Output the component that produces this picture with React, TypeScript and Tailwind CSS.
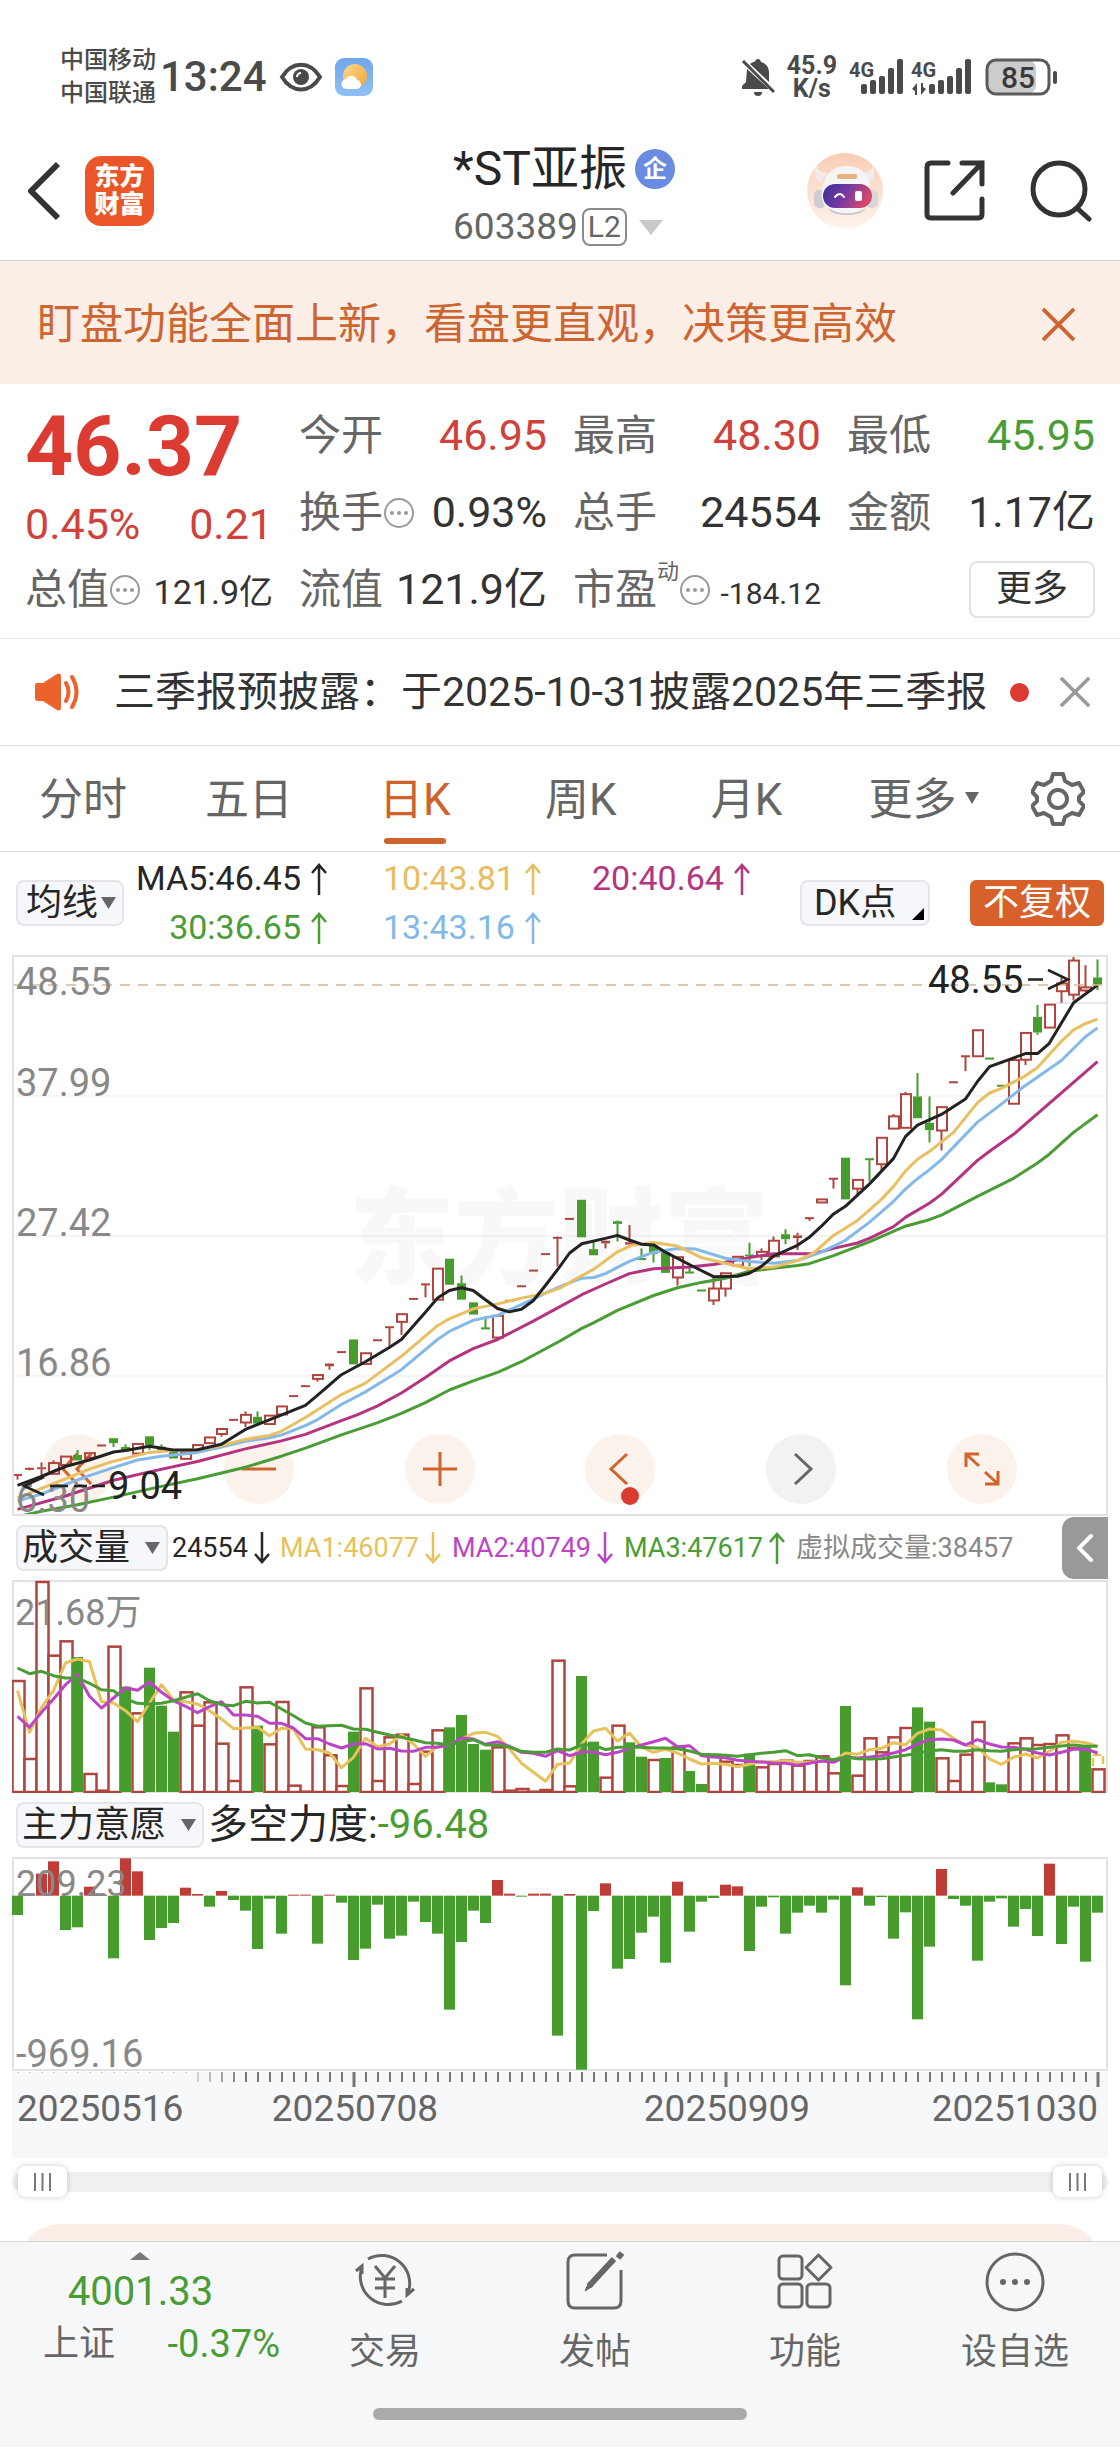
import { useState, type ReactNode } from 'react';
import clsx from 'clsx';

const RED = '#b0443e';
const GREEN = '#479c2e';

type Candle = ['r' | 'g', number, number, number, number];

// colour, high, body top, body bottom, low (price panel units, top = 44)
const CANDLES: Candle[] = [
  ['r', 1400, 1400, 1400, 1412], ['r', 1381, 1384, 1384, 1388], ['r', 1367, 1380, 1385, 1400],
  ['r', 1362, 1369, 1397, 1397], ['r', 1352, 1352, 1374, 1374], ['g', 1335, 1348, 1362, 1362],
  ['r', 1343, 1343, 1355, 1355], ['r', 1323, 1323, 1323, 1323], ['g', 1304, 1304, 1317, 1327],
  ['g', 1320, 1327, 1337, 1337], ['r', 1319, 1319, 1344, 1344], ['g', 1299, 1299, 1322, 1335],
  ['g', 1320, 1326, 1335, 1335], ['g', 1335, 1335, 1357, 1357], ['r', 1340, 1340, 1358, 1358],
  ['r', 1322, 1322, 1338, 1338], ['r', 1302, 1302, 1317, 1317], ['r', 1280, 1280, 1293, 1300],
  ['r', 1256, 1256, 1256, 1256], ['r', 1234, 1243, 1263, 1275], ['g', 1234, 1248, 1266, 1266],
  ['r', 1245, 1245, 1267, 1267], ['r', 1221, 1221, 1242, 1242], ['r', 1194, 1194, 1194, 1194],
  ['r', 1168, 1168, 1168, 1168], ['r', 1139, 1139, 1149, 1156], ['r', 1108, 1109, 1116, 1125],
  ['r', 1079, 1079, 1079, 1079], ['g', 1046, 1046, 1111, 1111], ['r', 1082, 1082, 1110, 1110],
  ['r', 1048, 1048, 1048, 1048], ['r', 1014, 1014, 1014, 1066], ['r', 980, 980, 1000, 1034],
  ['r', 940, 940, 940, 940], ['r', 902, 902, 902, 936], ['r', 861, 861, 942, 942],
  ['g', 835, 835, 903, 903], ['g', 879, 899, 942, 942], ['g', 949, 949, 981, 981],
  ['g', 985, 1017, 1017, 1017], ['r', 984, 984, 1041, 1041], ['r', 945, 945, 945, 945],
  ['r', 907, 907, 907, 907], ['r', 866, 866, 866, 866], ['r', 823, 823, 823, 823],
  ['r', 777, 778, 783, 855], ['r', 731, 731, 731, 731], ['g', 681, 681, 779, 779],
  ['g', 789, 810, 826, 826], ['r', 787, 788, 795, 808], ['g', 735, 737, 744, 790],
  ['r', 747, 792, 798, 798], ['g', 808, 836, 836, 836], ['g', 800, 800, 822, 845],
  ['g', 818, 818, 872, 872], ['r', 830, 831, 884, 905], ['g', 857, 871, 871, 871],
  ['g', 918, 918, 918, 918], ['r', 885, 913, 944, 956], ['r', 872, 873, 913, 934],
  ['r', 830, 830, 853, 853], ['g', 793, 824, 829, 855], ['r', 808, 817, 828, 838],
  ['r', 777, 788, 829, 829], ['g', 758, 771, 784, 797], ['r', 767, 774, 781, 812],
  ['r', 729, 729, 729, 736], ['r', 680, 680, 688, 688], ['r', 626, 626, 626, 652],
  ['g', 571, 571, 680, 680], ['r', 629, 629, 652, 666], ['g', 575, 575, 575, 632],
  ['r', 519, 519, 588, 605], ['r', 457, 463, 495, 495], ['r', 399, 405, 493, 493],
  ['g', 350, 411, 468, 468], ['g', 411, 480, 499, 531], ['r', 439, 439, 500, 552],
  ['r', 374, 374, 374, 374], ['r', 306, 306, 306, 345], ['r', 238, 238, 306, 306],
  ['g', 312, 312, 312, 312], ['g', 383, 383, 383, 383], ['r', 316, 316, 430, 430],
  ['r', 245, 245, 315, 329], ['g', 172, 203, 244, 250], ['r', 171, 171, 231, 231],
  ['r', 95, 116, 136, 166], ['r', 44, 56, 145, 160], ['r', 68, 126, 134, 138],
  ['g', 53, 100, 119, 133],
];

// Moving averages, sampled; each list is [left half, right half] of x,y pairs.
const PRICE_MAS: { color: string; left: string; right: string }[] = [
  {
    color: '#4a9c35',
    left: '49,1509 116,1495 217,1478 318,1458 452,1430 553,1410 687,1380 788,1351 855,1330 956,1295 1056,1264 1124,1239 1191,1211 1258,1178 1325,1154 1393,1132 1460,1104 1568,1050',
    right: '61,1017 95,1002 161,970 262,931 329,911 396,897 463,886 530,868 598,860 665,853 698,848 766,827 866,791 967,750 1034,733 1068,721 1169,672 1270,625 1337,585 1370,562 1438,505 1505,459',
  },
  {
    color: '#b5347f',
    left: '49,1490 183,1455 318,1414 418,1392 553,1365 687,1332 788,1311 855,1294 956,1258 1000,1243 1056,1220 1124,1186 1191,1145 1258,1102 1325,1070 1393,1046 1493,998 1568,960',
    right: '61,929 127,901 194,874 262,861 362,857 430,850 530,832 598,822 710,822 766,808 833,794 866,782 934,751 967,727 1034,690 1068,667 1169,578 1203,554 1270,510 1505,320',
  },
  {
    color: '#83b9e8',
    left: '49,1468 116,1450 183,1425 250,1402 318,1381 385,1361 452,1351 553,1341 620,1327 687,1312 754,1303 788,1296 855,1271 888,1256 956,1216 1023,1183 1124,1125 1225,1046 1258,1025 1325,996 1393,983 1460,955 1527,925 1568,908',
    right: '61,886 95,884 127,874 194,842 262,818 329,808 380,810 463,834 530,842 598,847 665,840 732,818 799,787 866,740 934,685 967,653 1001,626 1034,603 1068,576 1169,478 1236,431 1303,382 1404,317 1471,255 1505,232',
  },
  {
    color: '#eabf62',
    left: '49,1460 116,1435 183,1410 250,1385 318,1364 418,1341 485,1336 553,1334 620,1323 687,1307 754,1297 788,1286 855,1250 956,1190 1023,1160 1124,1090 1225,1010 1258,992 1325,966 1393,953 1460,938 1527,925 1568,912',
    right: '40,890 95,862 161,817 200,800 262,793 329,802 396,832 463,847 530,861 598,857 665,840 710,820 766,774 833,735 900,680 934,646 967,606 1001,575 1034,555 1102,505 1169,427 1203,402 1236,390 1303,357 1337,335 1404,267 1438,237 1471,221 1505,209',
  },
  {
    color: '#222222',
    left: '49,1427 116,1404 183,1378 250,1361 318,1340 352,1336 418,1325 485,1335 553,1334 620,1320 687,1281 754,1256 855,1218 888,1193 956,1138 1023,1104 1090,1067 1124,1046 1191,975 1225,938 1258,918 1292,911 1325,918 1359,942 1393,965 1426,974 1460,967 1493,945 1527,905 1568,855',
    right: '27,820 61,796 127,782 161,774 194,786 228,797 262,799 295,818 362,850 430,882 497,881 530,873 564,855 598,828 665,800 698,779 732,750 766,718 799,698 866,640 934,573 967,516 1001,486 1068,458 1135,418 1169,372 1203,333 1303,299 1337,299 1370,272 1438,166 1505,120',
  },
];

// Volume bar tops, 880 = zero, 246 = 21.68万
const VOLUMES = [
  543, 777, 246, 467, 424, 474, 822, 872, 440, 563, 640, 506, 620, 698, 577, 677, 607, 731, 843, 562,
  680, 733, 606, 857, 875, 682, 766, 858, 698, 565, 843, 712, 704, 852, 755, 691, 685, 648, 735, 752,
  742, 872, 867, 875, 870, 482, 859, 531, 728, 833, 677, 730, 773, 780, 777, 742, 816, 855, 765, 785,
  795, 764, 802, 792, 782, 797, 783, 769, 820, 621, 827, 715, 757, 712, 684, 625, 668, 775, 843, 764,
  666, 850, 856, 730, 715, 735, 732, 706, 745, 742, 808,
];
const GREEN_VOLUME = new Set([
  5, 9, 11, 12, 13, 20, 28, 36, 37, 38, 39, 47, 48, 51, 52, 54, 56, 57, 61, 69, 75, 76, 81, 82, 89,
]);

const VOLUME_MAS = [
  {
    color: '#e5c25a',
    values: [
      575, 700, 625, 575, 492, 480, 488, 608, 612, 635, 668, 612, 557, 603, 608, 615, 635, 660, 689, 687,
      685, 710, 688, 690, 750, 752, 762, 806, 775, 718, 743, 735, 708, 735, 772, 742, 738, 720, 703, 700,
      712, 750, 793, 820, 847, 796, 793, 735, 696, 688, 726, 702, 745, 760, 751, 762, 780, 795, 793, 796,
      803, 796, 788, 788, 786, 790, 790, 786, 787, 762, 766, 752, 748, 731, 738, 703, 690, 693, 718, 738,
      745, 780, 796, 775, 765, 777, 757, 730, 727, 731, 742,
    ],
  },
  {
    color: '#bb45c6',
    values: [
      652, 685, 640, 600, 557, 527, 592, 627, 597, 566, 574, 549, 580, 605, 622, 641, 623, 608, 648, 648,
      652, 673, 673, 687, 719, 719, 735, 747, 735, 734, 750, 748, 756, 757, 745, 745, 738, 717, 720, 736,
      728, 742, 760, 763, 772, 755, 770, 759, 759, 767, 760, 748, 738, 728, 718, 743, 740, 770, 774, 776,
      784, 787, 789, 792, 793, 799, 793, 786, 790, 774, 777, 774, 770, 762, 752, 735, 722, 720, 723, 738,
      722, 735, 744, 745, 751, 762, 768, 760, 751, 750, 762,
    ],
  },
  {
    color: '#4a9c35',
    values: [
      507, 524, 517, 530, 537, 537, 553, 572, 575, 600, 613, 615, 613, 605, 595, 584, 605, 617, 620, 607,
      612, 610, 630, 650, 672, 682, 680, 679, 690, 691, 700, 708, 715, 722, 731, 733, 738, 728, 722, 738,
      738, 744, 757, 760, 760, 750, 753, 738, 738, 752, 745, 745, 745, 747, 747, 749, 756, 766, 767, 769,
      772, 767, 763, 760, 755, 770, 767, 776, 782, 774, 779, 780, 779, 774, 769, 763, 756, 752, 757, 757,
      752, 755, 757, 752, 750, 749, 745, 741, 738, 742, 742,
    ],
  },
];

// Bar ends around the zero line at 290
const FORCE = [
  348, 287, 224, 187, 393, 385, 263, 287, 478, 178, 217, 423, 387, 372, 266, 285, 323, 276, 303, 335,
  450, 299, 404, 287, 287, 434, 287, 311, 483, 449, 317, 419, 410, 308, 369, 404, 632, 429, 335, 372,
  243, 284, 293, 284, 284, 710, 285, 812, 336, 253, 509, 480, 401, 353, 491, 248, 398, 308, 297, 257,
  262, 456, 323, 295, 404, 341, 320, 341, 302, 559, 265, 320, 294, 419, 340, 661, 443, 210, 300, 320,
  485, 308, 298, 383, 330, 411, 194, 435, 323, 488, 341,
];

const barX = (i: number) => 5.5 + i * 12;
const priceY = (v: number) => (v - 44) / 2.613 + 1;
const volumeY = (v: number) => (v - 246) / 3 + 1;
const forceY = (v: number) => (v - 177) / 3 + 1;

function pricePoints(left: string, right: string) {
  const place = (list: string, shift: number) =>
    list.split(' ').map((pair) => {
      const [x, y] = pair.split(',').map(Number);
      return `${((x + shift) / 2.8 - 12).toFixed(1)},${priceY(y).toFixed(1)}`;
    });
  return [...place(left, 0), ...place(right, 1568)].join(' ');
}

function SignalBars() {
  return (
    <>
      {[10, 14, 18, 26, 35].map((h, i) => (
        <rect key={h} x={18 + i * 9} y={36 - h} width="6" height={h} rx="2" />
      ))}
    </>
  );
}

function StatusBar() {
  return (
    <div className="flex items-center justify-between pt-11 pr-[62px] pb-3 pl-[60px] text-[#4a4a4a]">
      <div className="flex items-center">
        <div className="text-[24px] leading-[33px] font-medium">
          <p>中国移动</p>
          <p>中国联通</p>
        </div>
        <span className="ml-1 text-[42px] leading-[66px] font-medium">13:24</span>
        <svg className="ml-3 h-[30px] w-[44px]" viewBox="0 0 44 30" fill="none" stroke="currentColor">
          <path d="M3 15C13-1.500 31-1.500 41 15C31 31.500 13 31.500 3 15Z" strokeWidth="4" />
          <circle cx="22" cy="15" r="8" fill="currentColor" stroke="none" />
          <path d="M18 15a4 4 0 0 1 4-4" stroke="#fff" strokeWidth="2" />
        </svg>
        <svg className="ml-3 size-[38px]" viewBox="0 0 38 38">
          <defs>
            <linearGradient id="sky" x2="0" y2="1">
              <stop stopColor="#6fa6ec" />
              <stop offset="1" stopColor="#8fc1f5" />
            </linearGradient>
            <linearGradient id="sun" x2="1" y2="1">
              <stop stopColor="#fbd98a" />
              <stop offset="1" stopColor="#f2a437" />
            </linearGradient>
          </defs>
          <rect width="38" height="38" rx="9" fill="url(#sky)" />
          <circle cx="20" cy="18" r="12" fill="url(#sun)" />
          <path d="M12 31a5 5 0 0 1-1-10 6 6 0 0 1 11 1 4.500 4.500 0 0 1-1 9Z" fill="#fff" />
        </svg>
      </div>
      <div className="flex items-center">
        <svg className="h-[38px] w-[34px]" viewBox="0 0 34 38" fill="currentColor">
          <path d="M17 1c1.500 0 2.500 1 3 3 6 2 8 6 8 11v9L9 6c1-1 3-2 5-2.500C14.500 2 15.500 1 17 1ZM6 11l22 20H1v-3l4-4Z" />
          <path d="M2 3l31 31" stroke="currentColor" strokeWidth="3" />
          <path d="M13 34h8a4 4 0 0 1-8 0Z" />
        </svg>
        <div className="ml-3 text-center text-[25px] leading-[23px] font-bold">
          <p>45.9</p>
          <p>K/s</p>
        </div>
        <svg className="ml-3 h-[38px] w-[62px] overflow-visible" viewBox="-6 0 62 38" fill="currentColor">
          <text x="-6" y="19" className="text-[20px] font-bold">4G</text>
          <g transform="translate(-12 0)"><SignalBars /></g>
        </svg>
        <svg className="h-[38px] w-[62px] overflow-visible" viewBox="0 0 62 38" fill="currentColor">
          <text x="0" y="19" className="text-[20px] font-bold">4G</text>
          <path d="M1 31l5-6v12h-2v-4ZM15 31l-5 6V25h2v4Z" />
          <SignalBars />
        </svg>
        <svg className="ml-3 h-[38px] w-[73px]" viewBox="0 0 73 38">
          <rect x="3" y="3" width="48" height="32" rx="7" fill="#cccccc" />
          <rect x="2" y="2" width="62" height="34" rx="9" fill="none" stroke="#5a5a5a" strokeWidth="3" />
          <rect x="68" y="13" width="4" height="13" rx="2" fill="#4a4a4a" />
          <text x="33" y="30" textAnchor="middle" fill="#3a3a3a" className="text-[30px] font-medium">85</text>
        </svg>
      </div>
    </div>
  );
}

function Robot() {
  return (
    <svg className="size-[78px]" viewBox="0 0 78 78">
      <defs>
        <linearGradient id="halo" x2="0" y2="1">
          <stop stopColor="#f9cdb3" />
          <stop offset="1" stopColor="#fff4ee" />
        </linearGradient>
        <linearGradient id="visor" x2="1" y2=".3">
          <stop stopColor="#3a2f9c" />
          <stop offset=".55" stopColor="#7a3aa0" />
          <stop offset="1" stopColor="#d5486c" />
        </linearGradient>
      </defs>
      <circle cx="39" cy="39" r="38" fill="url(#halo)" />
      <path d="M10 14c-3 7-1 14 5 16l6-9c-6 0-9-3-11-7ZM67 14c3 7 1 14-5 16l-6-9c6 0 9-3 11-7Z" fill="#f1ecee" />
      <rect x="8" y="38" width="12" height="18" rx="5" fill="#cfcbd3" />
      <rect x="60" y="38" width="12" height="18" rx="5" fill="#d9d5db" />
      <path d="M16 38c2-15 10-24 25-24s22 9 24 24c2 14-5 24-24 24S14 53 16 38Z" fill="#f6f4f6" />
      <path d="M22 56c10 7 28 7 38 0-3 5-9 7-19 7s-16-2-19-7Z" fill="#c9c6cc" />
      <rect x="31" y="22" width="20" height="5" rx="2" fill="#e6b27c" />
      <rect x="17" y="32" width="49" height="24" rx="12" fill="url(#visor)" />
      <path d="M29 45q5-6 9 0" fill="none" stroke="#fff" strokeWidth="2" strokeLinecap="round" />
      <rect x="49" y="39" width="7" height="10" rx="2" fill="#fff" />
    </svg>
  );
}

function Header() {
  return (
    <header className="flex items-center justify-between border-b border-[#d5d5d8] pr-7 pl-6">
      <div className="flex w-[286px] items-center">
        <button type="button" aria-label="返回">
          <svg className="h-[60px] w-10" viewBox="0 0 40 60" fill="none" stroke="#333" strokeWidth="6">
            <path d="M34 3L7 30L34 57" strokeLinejoin="round" />
          </svg>
        </button>
        <span className="ml-[21px] grid h-[70px] w-[69px] place-content-center rounded-[16px] bg-[#ea5628] text-[25px] leading-[28px] font-black text-white">
          <span>东方</span>
          <span>财富</span>
        </span>
      </div>
      <div className="pt-[13px] pb-[9px] pl-3 text-center">
        <h1 className="flex items-center justify-center text-[48px] leading-[68px] text-[#262626]">
          *ST亚振
          <span className="ml-2 grid size-10 place-content-center rounded-full bg-[#698ce0] text-[24px] leading-[32px] font-bold text-white">
            企
          </span>
        </h1>
        <button type="button" className="flex items-center justify-center text-[37px] leading-[48px] text-[#666]">
          603389
          <span className="mr-3 ml-1 rounded-[8px] border-2 border-[#8a8a8a] px-1 text-[30px] leading-[34px]">L2</span>
          <svg className="h-[15px] w-6" viewBox="0 0 24 15"><path d="M0 0h24L12 15Z" fill="#c9c9c9" /></svg>
        </button>
      </div>
      <div className="flex w-[286px] items-center justify-end">
        <button type="button" aria-label="智能助手"><Robot /></button>
        <button type="button" aria-label="分享" className="ml-10">
          <svg className="size-[62px]" viewBox="0 0 62 62" fill="none" stroke="#333" strokeWidth="5" strokeLinecap="round">
            <path d="M24 3H7Q3 3 3 7V54Q3 58 7 58H54Q58 58 58 54V39" />
            <path d="M38 3H58V24M58 3L29 33" />
          </svg>
        </button>
        <button type="button" aria-label="搜索" className="ml-11">
          <svg className="size-[62px]" viewBox="0 0 62 62" fill="none" stroke="#333" strokeWidth="5" strokeLinecap="round">
            <circle cx="29" cy="29" r="26" />
            <path d="M47 48L59 59" />
          </svg>
        </button>
      </div>
    </header>
  );
}

function Cross({ className }: { className: string }) {
  return (
    <svg className={className} viewBox="0 0 34 34" fill="none" stroke="currentColor" strokeWidth="4">
      <path d="M1 1L33 33M33 1L1 33" />
    </svg>
  );
}

function InfoDot() {
  return (
    <svg className="size-8 shrink-0" viewBox="0 0 32 32" fill="#999">
      <circle cx="16" cy="16" r="14" fill="none" stroke="#999" strokeWidth="2" />
      <circle cx="9" cy="16" r="2" />
      <circle cx="16" cy="16" r="2" />
      <circle cx="23" cy="16" r="2" />
    </svg>
  );
}

function Stat({ label, info, sup, children }: { label: string; info?: boolean; sup?: string; children: ReactNode }) {
  return (
    <dl className="flex h-[77px] items-center whitespace-nowrap">
      <dt className="flex items-center text-[42px] text-[#666]">
        {label}
        {sup && <span className="self-start text-[22px] leading-[28px]">{sup}</span>}
        {info && <InfoDot />}
      </dt>
      <dd className="ml-auto text-[43px]">{children}</dd>
    </dl>
  );
}

function Quote() {
  return (
    <section className="grid grid-cols-4 gap-x-[26px] border-b border-[#e6e6e8] px-[25px] pt-[13px] pb-[10px] text-[#333]">
      <div className="row-span-2 text-[#cf413a]">
        <p className="text-[84px] leading-[100px] font-bold text-[#dc3b32]">46.37</p>
        <p className="flex justify-between text-[43px] leading-[54px]">
          <span>0.45%</span>
          <span>0.21</span>
        </p>
      </div>
      <Stat label="今开"><span className="text-[#cf413a]">46.95</span></Stat>
      <Stat label="最高"><span className="text-[#cf413a]">48.30</span></Stat>
      <Stat label="最低"><span className="text-[#4a9c35]">45.95</span></Stat>
      <Stat label="换手" info>0.93%</Stat>
      <Stat label="总手">24554</Stat>
      <Stat label="金额">1.17亿</Stat>
      <Stat label="总值" info><span className="text-[34px]">121.9亿</span></Stat>
      <Stat label="流值">121.9亿</Stat>
      <Stat label="市盈" sup="动" info><span className="text-[30px]">-184.12</span></Stat>
      <div className="flex h-[77px] items-center justify-end">
        <button type="button" className="rounded-[8px] border-2 border-[#e2e2e4] px-[25px] text-[36px] leading-[53px]">
          更多
        </button>
      </div>
    </section>
  );
}

function Notice() {
  return (
    <div className="flex items-center pr-[30px] pl-[35px] text-[41px] leading-[106px] whitespace-nowrap text-[#333]">
      <svg className="mr-[33px] h-[38px] w-[46px] shrink-0" viewBox="0 0 46 38" fill="#ec622b">
        <path d="M2 10Q0 10 0 13V25Q0 28 3 28H8L22 37Q26 39 26 34V4Q26-1 22 1L8 10Z" />
        <path d="M31 10q5 9 0 18M37 4q9 15 0 30" fill="none" stroke="#ec622b" strokeWidth="4" strokeLinecap="round" />
      </svg>
      <p>三季报预披露：于2025-10-31披露2025年三季报</p>
      <span className="mr-[31px] ml-auto size-[19px] rounded-full bg-[#dc3b32]" />
      <button type="button" aria-label="关闭公告" className="text-[#999]"><Cross className="size-[30px]" /></button>
    </div>
  );
}

const TABS = ['分时', '五日', '日K', '周K', '月K', '更多'];

function Tabs() {
  const [active, setActive] = useState('日K');
  return (
    <nav className="grid grid-cols-[repeat(6,4fr)_3fr] border-y border-[#dcdcde]">
      {TABS.map((t) => (
        <button
          key={t}
          type="button"
          onClick={() => setActive(t)}
          className={clsx('relative pt-1 text-[44px] leading-[101px]', t === active ? 'text-[#d0622c]' : 'text-[#666]')}
        >
          {t}
          {t === '更多' && (
            <svg className="absolute top-[46px] right-[17px] h-3 w-[14px]" viewBox="0 0 14 12">
              <path d="M0 0h14L7 12Z" fill="#666" />
            </svg>
          )}
          {t === active && (
            <span className="absolute bottom-[7px] left-1/2 h-[6px] w-[62px] -translate-x-1/2 rounded-full bg-[#d0622c]" />
          )}
        </button>
      ))}
      <button type="button" aria-label="设置" className="grid place-content-center">
        <svg className="size-[54px]" viewBox="0 0 54 54" fill="none" stroke="#666" strokeWidth="4" strokeLinejoin="round">
          <path d="M22 2H32L34 9L41 13L48 11L53 20L48 25V29L53 34L48 43L41 41L34 45L32 52H22L20 45L13 41L6 43L1 34L6 29V25L1 20L6 11L13 13L20 9Z" />
          <circle cx="27" cy="27" r="9" />
        </svg>
      </button>
    </nav>
  );
}

function Picker({ name, options, className }: { name: string; options: string[]; className: string }) {
  return (
    <label className="relative flex items-center">
      <select
        aria-label={name}
        className={clsx(
          'appearance-none rounded-[8px] border-2 border-[#e3e5e8] bg-[#f6f7fa] text-[36px] leading-[42px] text-[#262626]',
          className,
        )}
      >
        {options.map((o) => <option key={o}>{o}</option>)}
      </select>
      <svg className="pointer-events-none absolute right-2 h-3 w-[15px]" viewBox="0 0 15 12">
        <path d="M0 0h15L7.500 12Z" fill="#666" />
      </svg>
    </label>
  );
}

function Arrow({ down }: { down?: boolean }) {
  return (
    <svg className="h-8 w-5 shrink-0" viewBox="0 0 20 32" fill="none" stroke="currentColor" strokeWidth="2.500">
      <path d={down ? 'M10 0V30M3 22L10 30L17 22' : 'M10 32V2M3 10L10 2L17 10'} />
    </svg>
  );
}

function MaBar() {
  const cell = 'flex items-center gap-2';
  return (
    <div className="flex items-center pr-4 pl-4 pt-[2px] pb-[3px] whitespace-nowrap">
      <Picker name="均线" options={['均线']} className="w-[108px] pl-2" />
      <div className="ml-3 grid grid-cols-[193px_209px_1fr] text-[34px] leading-[49px]">
        <span className={clsx(cell, 'justify-end text-[#262626]')}>MA5:46.45<Arrow /></span>
        <span className={clsx(cell, 'pl-[54px] text-[#e8bd60]')}>10:43.81<Arrow /></span>
        <span className={clsx(cell, 'pl-[54px] text-[#b5347f]')}>20:40.64<Arrow /></span>
        <span className={clsx(cell, 'justify-end text-[#4a9c35]')}>30:36.65<Arrow /></span>
        <span className={clsx(cell, 'pl-[54px] text-[#83b9e8]')}>13:43.16<Arrow /></span>
      </div>
      <button
        type="button"
        className="relative ml-auto w-[130px] rounded-[8px] border-2 border-[#e3e5e8] bg-[#f6f7fa] pl-3 text-left text-[36px] leading-[42px] text-[#262626]"
      >
        DK点
        <svg className="absolute right-1 bottom-1 size-3" viewBox="0 0 12 12"><path d="M12 0V12H0Z" /></svg>
      </button>
      <button type="button" className="ml-10 rounded-[6px] bg-[#d8612b] px-[13px] text-[36px] leading-[46px] text-white">
        不复权
      </button>
    </div>
  );
}

function CandleMark({ candle, x }: { candle: Candle; x: number }) {
  const [kind, high, top, bottom, low] = candle;
  const color = kind === 'r' ? RED : GREEN;
  const t = priceY(top);
  const b = priceY(bottom);
  const hollow = kind === 'r' && bottom - top > 7;
  return (
    <g stroke={color} strokeWidth="2">
      {high < top && <path d={`M${x} ${priceY(high)}V${t}`} />}
      {low > bottom && <path d={`M${x} ${b}V${priceY(low)}`} />}
      {top === bottom ? (
        <path d={`M${x - 4.5} ${t}h9`} />
      ) : hollow ? (
        <rect x={x - 4.5} y={t} width="10" height={b - t} fill="none" />
      ) : (
        <rect x={x - 4.5} y={t} width="9" height={b - t} fill={color} stroke="none" />
      )}
    </g>
  );
}

function RoundButton({ label, muted, dot, children }: { label: string; muted?: boolean; dot?: boolean; children: ReactNode }) {
  return (
    <button
      type="button"
      aria-label={label}
      className={clsx(
        'relative grid size-[70px] place-content-center rounded-full',
        muted ? 'bg-[#f2f2f2] text-[#666]' : 'bg-[#fcf2ec] text-[#d0622c]',
      )}
    >
      <svg className="size-9" viewBox="0 0 36 36" fill="none" stroke="currentColor" strokeWidth="3">{children}</svg>
      {dot && <span className="absolute right-4 -bottom-px size-[18px] rounded-full bg-[#dc3b32]" />}
    </button>
  );
}

const PRICE_LABELS = [
  { text: '48.55', y: 40 },
  { text: '37.99', y: 141 },
  { text: '27.42', y: 281 },
  { text: '16.86', y: 421 },
  { text: '6.30', y: 557 },
];

function PriceChart() {
  return (
    <div className="relative mx-3">
      <div className="absolute right-[91px] bottom-3 left-[31px] flex justify-between">
        <RoundButton label="最早"><path d="M17 3L3 18L17 33M31 3L17 18L31 33" /></RoundButton>
        <RoundButton label="缩小"><path d="M1 18H35" /></RoundButton>
        <RoundButton label="放大"><path d="M1 18H35M18 1V35" /></RoundButton>
        <RoundButton label="向左" dot><path d="M25 3L9 18L25 33" /></RoundButton>
        <RoundButton label="向右" muted><path d="M12 3L28 18L12 33" /></RoundButton>
        <RoundButton label="全屏"><path d="M2 16V3H15M2 3L15 15M34 20V33H21M34 33L21 21" /></RoundButton>
      </div>
      <svg className="pointer-events-none relative block w-full" viewBox="0 0 1096 561">
        <text x="337" y="320" fill="#f8f8f8" className="text-[105px] font-black">东方财富</text>
        <path d="M0 141H1096M0 281H1096M0 421H1096" stroke="#d6d6d6" strokeDasharray="1 1" />
        <path d="M1044 48H1096" stroke="#cfcfcf" />
        {CANDLES.map((c, i) => <CandleMark key={i} candle={c} x={barX(i)} />)}
        {PRICE_MAS.map((m) => (
          <polyline
            key={m.color}
            points={pricePoints(m.left, m.right)}
            fill="none"
            stroke={m.color}
            strokeWidth="3"
            strokeLinejoin="round"
          />
        ))}
        <path d="M0 30H1096" stroke="#d6b88f" strokeWidth="1.500" strokeDasharray="10 8" />
        <g fill="#888" className="text-[38px]">
          {PRICE_LABELS.map((l) => <text key={l.text} x="4" y={l.y}>{l.text}</text>)}
        </g>
        <g fill="#222" className="text-[38px]">
          <text x="916" y="38">48.55</text>
          <text x="96" y="544">9.04</text>
        </g>
        <path
          d="M1016 24.500H1031M1036 15L1056 24.500L1036 34M32 522L12 531L32 540M38 531H56M62 531H75M80 531H93"
          fill="none"
          stroke="#222"
          strokeWidth="2.500"
        />
        <rect x="1" y="1" width="1094" height="559" fill="none" stroke="#e2e2e2" strokeWidth="2" />
      </svg>
    </div>
  );
}

function VolumeChart() {
  return (
    <svg className="block w-full px-3" viewBox="0 0 1096 213">
      <rect x="1" y="1" width="1094" height="211" fill="none" stroke="#e2e2e2" strokeWidth="2" />
      {VOLUMES.map((v, i) => {
        const y = volumeY(v);
        return GREEN_VOLUME.has(i) ? (
          <rect key={i} x={barX(i) - 5.5} y={y} width="11" height={212 - y} fill={GREEN} />
        ) : (
          <rect key={i} x={barX(i) - 5} y={y + 1} width="12" height={211 - y} fill="#fff" stroke={RED} strokeWidth="2.500" />
        );
      })}
      <path d="M1081 186V175H1091V186" fill="none" stroke="#e5c25a" strokeWidth="2.500" strokeDasharray="8 3" />
      {VOLUME_MAS.map((m) => (
        <polyline
          key={m.color}
          points={m.values.map((v, i) => `${barX(i)},${volumeY(v).toFixed(1)}`).join(' ')}
          fill="none"
          stroke={m.color}
          strokeWidth="3"
          strokeLinejoin="round"
        />
      ))}
      <text x="3" y="45" fill="#888" className="text-[36px]">21.68万</text>
    </svg>
  );
}

function ForceChart() {
  return (
    <svg className="block w-full px-3" viewBox="0 0 1096 214">
      <rect x="1" y="1" width="1094" height="212" fill="none" stroke="#e2e2e2" strokeWidth="2" />
      {FORCE.map((v, i) => {
        const up = v < 290;
        const y = forceY(up ? v : 290);
        return (
          <rect
            key={i}
            x={barX(i) - 5.5}
            y={y}
            width="11"
            height={Math.abs(v - 290) / 3}
            fill={up ? '#c03c36' : GREEN}
          />
        );
      })}
      <g fill="#888" className="text-[36px]">
        <text x="4" y="39">209.23</text>
        <text x="4" y="210" className="text-[38px]">-969.16</text>
      </g>
    </svg>
  );
}

const MAJOR_TICKS = [28, 59, 90];

function Timeline() {
  return (
    <svg className="block w-full px-3" viewBox="0 0 1096 87">
      <rect y="1" width="1096" height="86" fill="#f7f8fa" />
      {CANDLES.map((_, i) => {
        const major = MAJOR_TICKS.includes(i);
        const height = i < 15 ? 1 : major ? 15 : 10;
        return (
          <rect
            key={i}
            x={barX(i) - (major ? 1 : 0.5)}
            y="1"
            width={major ? 3 : 2}
            height={height}
            fill="#777"
            opacity={i < 15 ? 0.3 : Math.min(1, (i - 13) / 6)}
          />
        );
      })}
      <g fill="#666" className="text-[37px]">
        <text x="5" y="50">20250516</text>
        <text x="343" y="50" textAnchor="middle">20250708</text>
        <text x="715" y="50" textAnchor="middle">20250909</text>
        <text x="1086" y="50" textAnchor="end">20251030</text>
      </g>
    </svg>
  );
}

function Grip() {
  return (
    <span className="grid h-[31px] w-[49px] place-content-center rounded-[8px] bg-white shadow-[0_0_6px_rgba(0,0,0,0.2)]">
      <svg className="h-[18px] w-[19px]" viewBox="0 0 19 18" stroke="#777" strokeWidth="2">
        <path d="M2 0V18M9.500 0V18M17 0V18" />
      </svg>
    </span>
  );
}

function RangeSlider() {
  return (
    <div className="relative mx-3 mt-2 mb-[27px] flex h-[31px] items-center justify-between px-[6px]">
      <span className="absolute inset-x-0 h-5 rounded-full bg-[#f0f0f3]" />
      <span className="relative"><Grip /></span>
      <span className="relative"><Grip /></span>
      <input type="range" aria-label="起始日期" defaultValue={0} className="absolute left-0 w-1/2 opacity-0" />
      <input type="range" aria-label="结束日期" defaultValue={100} className="absolute right-0 w-1/2 opacity-0" />
    </div>
  );
}

const ACTIONS: { label: string; icon: ReactNode }[] = [
  {
    label: '交易',
    icon: (
      <>
        <path d="M15 9A28 28 0 0 1 55 43M49 51A28 28 0 0 1 9 17" />
        <path d="M3 21L9 16V24M61 39L54 45V38" />
        <path d="M22 16L32 28L42 16M32 28V48M22 29H42M22 38H42" />
      </>
    ),
  },
  {
    label: '发帖',
    icon: (
      <>
        <path d="M44 5H12Q5 5 5 12V51Q5 58 12 58H51Q58 58 58 51V20" />
        <path d="M26 36L51 9" strokeWidth="6" />
        <path d="M55 8L59 3" strokeWidth="6" />
        <path d="M22 41L30 36L26 32Z" fill="currentColor" strokeWidth="1" />
      </>
    ),
  },
  {
    label: '功能',
    icon: (
      <>
        <rect x="6" y="6" width="23" height="23" rx="4" />
        <rect x="6" y="34" width="23" height="23" rx="4" />
        <rect x="34" y="34" width="23" height="23" rx="4" />
        <path d="M45.500 5L58 17.500L45.500 30L33 17.500Z" strokeLinejoin="round" />
      </>
    ),
  },
  {
    label: '设自选',
    icon: (
      <>
        <circle cx="32" cy="32" r="28" />
        <g fill="currentColor" stroke="none">
          <circle cx="20" cy="32" r="3" />
          <circle cx="32" cy="32" r="3" />
          <circle cx="44" cy="32" r="3" />
        </g>
      </>
    ),
  },
];

function BottomBar() {
  return (
    <footer className="border-t border-[#d3d6d9] bg-[#f6f7f9] pb-[27px] text-[#666]">
      <div className="flex">
        <a href="#index" className="block w-1/4 pt-[10px] pl-[43px]">
          <svg className="ml-[87px] h-2 w-5" viewBox="0 0 20 8"><path d="M10 0L20 8H0Z" fill="#777" /></svg>
          <p className="w-[195px] pt-2 text-center text-[40px] leading-[48px] text-[#4a9c35]">4001.33</p>
          <p className="flex justify-between text-[36px] leading-[56px]">
            上证<span className="text-[38px] text-[#4a9c35]">-0.37%</span>
          </p>
        </a>
        {ACTIONS.map((a) => (
          <button key={a.label} type="button" className="flex flex-1 flex-col items-center pt-2 text-[36px] leading-[52px]">
            <svg className="mb-3 size-16" viewBox="0 0 64 64" fill="none" stroke="currentColor" strokeWidth="3">
              {a.icon}
            </svg>
            {a.label}
          </button>
        ))}
      </div>
      <div className="mx-auto mt-[30px] h-3 w-1/3 rounded-full bg-[#a9abab]" />
    </footer>
  );
}

export default function App() {
  const [banner, setBanner] = useState(true);
  return (
    <div lang="zh-CN" className="bg-white font-['Roboto','Noto_Sans_CJK_SC',sans-serif]">
      <StatusBar />
      <Header />
      {banner && (
        <div className="flex items-center justify-between bg-[#fbeee7] pt-[34px] pb-[30px] pr-[45px] pl-[37px] text-[43px] leading-[59px] text-[#cd6530]">
          <p>盯盘功能全面上新，看盘更直观，决策更高效</p>
          <button type="button" aria-label="关闭" onClick={() => setBanner(false)}>
            <Cross className="size-[33px]" />
          </button>
        </div>
      )}
      <Quote />
      <Notice />
      <Tabs />
      <MaBar />
      <PriceChart />
      <div className="flex h-16 items-center pr-3 pl-4 text-[27px] whitespace-nowrap">
        <Picker name="成交量" options={['成交量']} className="w-[152px] pl-1" />
        <span className="ml-1 flex w-[108px] items-center gap-1 text-[#262626]">24554<Arrow down /></span>
        <span className="flex w-[172px] items-center gap-1 text-[#e5c25a]">MA1:46077<Arrow down /></span>
        <span className="flex w-[172px] items-center gap-1 text-[#bb45c6]">MA2:40749<Arrow down /></span>
        <span className="flex w-[172px] items-center gap-1 text-[#4a9c35]">MA3:47617<Arrow /></span>
        <span className="text-[#888]">虚拟成交量:38457</span>
        <button type="button" aria-label="展开" className="ml-auto grid h-[62px] w-[46px] place-content-center rounded-l-[12px] bg-[#999]">
          <svg className="h-7 w-4" viewBox="0 0 16 28" fill="none" stroke="#fff" strokeWidth="4" strokeLinecap="round">
            <path d="M14 2L2 14L14 26" />
          </svg>
        </button>
      </div>
      <VolumeChart />
      <div className="flex h-16 items-center pl-4 text-[40px] whitespace-nowrap text-[#262626]">
        <Picker name="主力意愿" options={['主力意愿']} className="w-[188px] pl-1" />
        <span className="ml-1">多空力度:<span className="text-[#4a9c35]">-96.48</span></span>
      </div>
      <ForceChart />
      <Timeline />
      <RangeSlider />
      <div className="mx-4 h-[17px] overflow-hidden">
        <div className="h-24 rounded-[46px] bg-[#fbeee7]" />
      </div>
      <BottomBar />
    </div>
  );
}
